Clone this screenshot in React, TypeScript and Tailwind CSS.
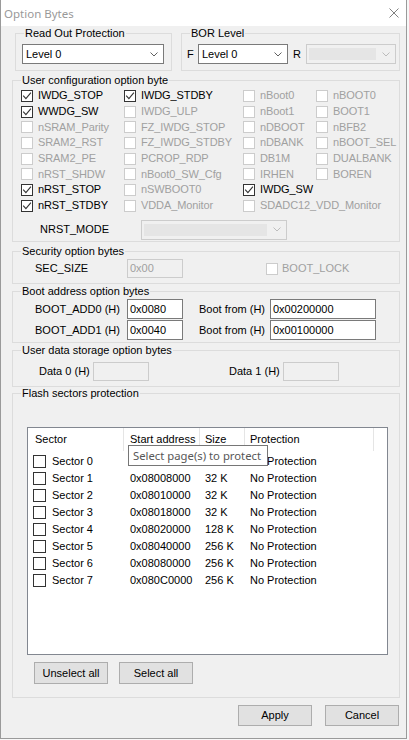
import * as React from "react"

function classNames(...xs: Array<string | false | null | undefined>) {
  return xs.filter(Boolean).join(" ")
}

// little win32 look-alikes
function Check(props: { checked?: boolean; disabled?: boolean; big?: boolean }) {
  const { checked, disabled, big } = props
  return (
    <span
      className={classNames(
        "flex shrink-0 items-center justify-center border bg-white",
        big ? "h-[13px] w-[13px]" : "h-[12px] w-[12px]",
        disabled ? "border-[#cccccc]" : "border-[#333333]"
      )}
    >
      {checked && (
        <svg viewBox="0 0 10 10" className="h-[10px] w-[10px]">
          <path d="M1.2 4.6 L3.9 7.6 L8.9 1.6" fill="none" stroke="#333333" strokeWidth="1.1" />
        </svg>
      )}
    </span>
  )
}

function Chevron(props: { disabled?: boolean }) {
  return (
    <svg viewBox="0 0 8 5" className="h-[5px] w-[8px] shrink-0">
      <path
        d="M0.5 0.5 L4 4 L7.5 0.5"
        fill="none"
        stroke={props.disabled ? "#bcbcbc" : "#606060"}
        strokeWidth="1"
      />
    </svg>
  )
}

function Combo(props: { value?: string; disabled?: boolean; className?: string }) {
  const { value, disabled, className } = props
  if (disabled) {
    return (
      <div
        className={classNames(
          "flex items-center border border-[#cccccc] bg-[#f0f0f0] py-[3px] pl-[2px] pr-[5px]",
          className
        )}
      >
        <div className="mr-[6px] h-full flex-1 bg-[#e5e5e5]" />
        <Chevron disabled />
      </div>
    )
  }
  return (
    <div
      className={classNames(
        "flex items-center border border-[#7a7a7a] bg-white pl-[3px] pr-[5px]",
        className
      )}
    >
      <span className="flex-1">{value}</span>
      <Chevron />
    </div>
  )
}

function Field(props: { value?: string; disabled?: boolean; className?: string }) {
  const { value, disabled, className } = props
  return (
    <div
      className={classNames(
        "flex items-center border pl-[2px]",
        disabled ? "border-[#cccccc] bg-[#f0f0f0] text-[#a0a0a0]" : "border-[#7a7a7a] bg-white",
        className
      )}
    >
      {value}
    </div>
  )
}

function Group(props: { title: string; className?: string; children?: React.ReactNode }) {
  return (
    <fieldset className={classNames("min-w-0 border border-[#dcdcdc]", props.className)}>
      <legend className="ml-[8px] px-[1px] leading-[13px]">{props.title}</legend>
      {props.children}
    </fieldset>
  )
}

function Btn(props: { label: string; className?: string }) {
  return (
    <div
      className={classNames(
        "flex items-center justify-center border border-[#adadad] bg-[#e1e1e1]",
        props.className
      )}
    >
      {props.label}
    </div>
  )
}

type Opt = { label: string; checked?: boolean; disabled?: boolean } | null

const USER_OPTS: Opt[][] = [
  [
    { label: "IWDG_STOP", checked: true },
    { label: "IWDG_STDBY", checked: true },
    { label: "nBoot0", disabled: true },
    { label: "nBOOT0", disabled: true },
  ],
  [
    { label: "WWDG_SW", checked: true },
    { label: "IWDG_ULP", disabled: true },
    { label: "nBoot1", disabled: true },
    { label: "BOOT1", disabled: true },
  ],
  [
    { label: "nSRAM_Parity", disabled: true },
    { label: "FZ_IWDG_STOP", disabled: true },
    { label: "nDBOOT", disabled: true },
    { label: "nBFB2", disabled: true },
  ],
  [
    { label: "SRAM2_RST", disabled: true },
    { label: "FZ_IWDG_STDBY", disabled: true },
    { label: "nDBANK", disabled: true },
    { label: "nBOOT_SEL", disabled: true },
  ],
  [
    { label: "SRAM2_PE", disabled: true },
    { label: "PCROP_RDP", disabled: true },
    { label: "DB1M", disabled: true },
    { label: "DUALBANK", disabled: true },
  ],
  [
    { label: "nRST_SHDW", disabled: true },
    { label: "nBoot0_SW_Cfg", disabled: true },
    { label: "IRHEN", disabled: true },
    { label: "BOREN", disabled: true },
  ],
  [
    { label: "nRST_STOP", checked: true },
    { label: "nSWBOOT0", disabled: true },
    { label: "IWDG_SW", checked: true },
    null,
  ],
  [
    { label: "nRST_STDBY", checked: true },
    { label: "VDDA_Monitor", disabled: true },
    { label: "SDADC12_VDD_Monitor", disabled: true },
    null,
  ],
]

const SECTORS = [
  { addr: "0x08000000", size: "32 K" },
  { addr: "0x08008000", size: "32 K" },
  { addr: "0x08010000", size: "32 K" },
  { addr: "0x08018000", size: "32 K" },
  { addr: "0x08020000", size: "128 K" },
  { addr: "0x08040000", size: "256 K" },
  { addr: "0x08080000", size: "256 K" },
  { addr: "0x080C0000", size: "256 K" },
]

export default function App() {
  return (
    <div className="h-[740px] w-[409px] bg-[#f7f7f7] font-['Liberation_Sans',Arial,sans-serif] text-[11px] leading-[13px] text-black">
      <div className="flex h-[739px] w-[407px] flex-col border border-t-0 border-[#9a9a9a] bg-[#f0f0f0]">
        {/* title bar */}
        <div className="flex h-[26px] items-center justify-between bg-white pl-[3px] pr-[7px]">
          <span className="font-['Noto_Sans',sans-serif] text-[11.5px] text-[#999999]">Option Bytes</span>
          <svg viewBox="0 0 10 10" className="h-[10px] w-[10px]">
            <path d="M0.5 0.5 L9.5 9.5 M9.5 0.5 L0.5 9.5" stroke="#808080" strokeWidth="1" />
          </svg>
        </div>

        <div className="flex flex-1 flex-col pl-[11px] pr-[6px]">
          {/* RDP + BOR */}
          <div className="mt-[1px] flex">
            <Group title="Read Out Protection" className="ml-[3px] h-[44px] w-[157px]">
              <Combo value="Level 0" className="ml-[6px] mt-[4px] h-[20px] w-[142px]" />
            </Group>
            <Group title="BOR Level" className="ml-[9px] h-[44px] w-[219px]">
              <div className="mt-[4px] flex items-center pl-[5px]">
                <span className="w-[11px]">F</span>
                <Combo value="Level 0" className="h-[20px] w-[90px]" />
                <span className="ml-[5px] w-[13px]">R</span>
                <Combo disabled className="h-[20px] w-[90px]" />
              </div>
            </Group>
          </div>

          {/* user config */}
          <Group title="User configuration option byte" className="mt-[3px] h-[168px]">
            <div className="mt-[1px] grid grid-cols-[103px_119px_73px_1fr] auto-rows-[15.7px] pl-[8px] tracking-[-0.1px]">
              {USER_OPTS.flat().map((o, i) =>
                o ? (
                  <div key={i} className="flex items-center gap-[5px] whitespace-nowrap">
                    <Check checked={o.checked} disabled={o.disabled} />
                    <span className={o.disabled ? "text-[#a0a0a0]" : ""}>{o.label}</span>
                  </div>
                ) : (
                  <div key={i} />
                )
              )}
            </div>
            <div className="mt-[6px] flex items-center pl-[27px]">
              <span className="w-[101px]">NRST_MODE</span>
              <Combo disabled className="h-[20px] w-[146px]" />
            </div>
          </Group>

          {/* security */}
          <Group title="Security option bytes" className="mt-[3px] h-[39px]">
            <div className="mt-[1px] flex items-center pl-[22px]">
              <span className="w-[92px]">SEC_SIZE</span>
              <Field value="0x00" disabled className="h-[19px] w-[56px]" />
              <div className="ml-[83px] flex items-center gap-[4px]">
                <Check disabled />
                <span className="text-[#a0a0a0]">BOOT_LOCK</span>
              </div>
            </div>
          </Group>

          {/* boot address */}
          <Group title="Boot address option bytes" className="mt-[1px] h-[58px]">
            {[
              ["BOOT_ADD0 (H)", "0x0080", "0x00200000"],
              ["BOOT_ADD1 (H)", "0x0040", "0x00100000"],
            ].map(([lbl, v, from]) => (
              <div key={lbl} className="mt-[1px] flex items-center pl-[22px]">
                <span className="w-[92px]">{lbl}</span>
                <Field value={v} className="h-[20px] w-[56px]" />
                <span className="ml-[16px] w-[71px]">Boot from (H)</span>
                <Field value={from} className="h-[20px] w-[106px]" />
              </div>
            ))}
          </Group>

          {/* user data */}
          <Group title="User data storage option bytes" className="mt-[1px] h-[43px]">
            <div className="mt-[5px] flex items-center pl-[26px]">
              <span className="w-[54px]">Data 0 (H)</span>
              <Field disabled className="h-[19px] w-[56px]" />
              <span className="ml-[80px] w-[54px]">Data 1 (H)</span>
              <Field disabled className="h-[19px] w-[56px]" />
            </div>
          </Group>

          {/* flash sectors */}
          <Group title="Flash sectors protection" className="h-[311px]">
            <div className="relative ml-[14px] mt-[27px] h-[228px] w-[361px] border border-[#828790] bg-white">
              <div className="flex h-[23px]">
                <div className="flex w-[96px] items-center border-r border-[#e5e5e5] pl-[7px]">Sector</div>
                <div className="flex w-[76px] items-center border-r border-[#e5e5e5] pl-[6px]">Start address</div>
                <div className="flex w-[45px] items-center border-r border-[#e5e5e5] pl-[5px]">Size</div>
                <div className="flex w-[129px] items-center border-r border-[#e5e5e5] pl-[5px]">Protection</div>
              </div>
              <div className="mt-[2px]">
                {SECTORS.map((s, i) => (
                  <div key={i} className="flex h-[17px] items-center">
                    <div className="flex w-[96px] items-center gap-[6px] pl-[5px]">
                      <Check big />
                      <span>Sector {i}</span>
                    </div>
                    <div className="w-[76px] pl-[6px]">{s.addr}</div>
                    <div className="w-[45px] pl-[5px]">{s.size}</div>
                    <div className="w-[129px] pl-[5px]">No Protection</div>
                  </div>
                ))}
              </div>

              {/* tooltip */}
              <div className="absolute left-[100px] top-[17px] flex h-[21px] w-[140px] items-center border border-[#767676] bg-white pl-[4px] font-['Noto_Sans',sans-serif] text-[11.3px] text-[#575757]">
                Select page(s) to protect
              </div>
            </div>
            <div className="mt-[7px] flex gap-[11px] pl-[21px]">
              <Btn label="Unselect all" className="h-[22px] w-[74px]" />
              <Btn label="Select all" className="h-[22px] w-[74px]" />
            </div>
          </Group>

          <div className="mt-[7px] flex justify-end gap-[13px] pr-[1px]">
            <Btn label="Apply" className="h-[21px] w-[74px]" />
            <Btn label="Cancel" className="h-[21px] w-[74px]" />
          </div>
        </div>
      </div>
    </div>
  )
}
